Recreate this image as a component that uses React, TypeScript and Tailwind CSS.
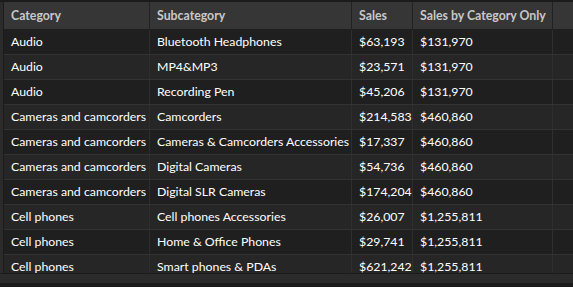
const rows = [
  ["Audio", "Bluetooth Headphones", "$63,193", "$131,970"],
  ["Audio", "MP4&MP3", "$23,571", "$131,970"],
  ["Audio", "Recording Pen", "$45,206", "$131,970"],
  ["Cameras and camcorders", "Camcorders", "$214,583", "$460,860"],
  ["Cameras and camcorders", "Cameras & Camcorders Accessories", "$17,337", "$460,860"],
  ["Cameras and camcorders", "Digital Cameras", "$54,736", "$460,860"],
  ["Cameras and camcorders", "Digital SLR Cameras", "$174,204", "$460,860"],
  ["Cell phones", "Cell phones Accessories", "$26,007", "$1,255,811"],
  ["Cell phones", "Home & Office Phones", "$29,741", "$1,255,811"],
  ["Cell phones", "Smart phones & PDAs", "$621,242", "$1,255,811"],
];

const cols = "grid grid-cols-[146px_202px_61px_140px_1fr]";

export default function App() {
  return (
    <div
      className="w-[573px] h-[287px] bg-[#1b1b1b] overflow-hidden text-[12.3px]"
      style={{ fontFamily: 'Lato, "Open Sans", sans-serif' }}
    >
      <div className="flex h-[273px] border-t-2 border-[#1b1b1b]">
        {/* left strip */}
        <div className="w-[4px] shrink-0 bg-[#2b2b2b] border-r border-[#1b1b1b]" />
        <div className="flex-1 flex flex-col overflow-hidden">
          <div className={`${cols} h-[28px] shrink-0 bg-[#363636] border-b border-[#1e1e1e] text-[#c8c8c8] font-bold`}>
            <div className="pl-[7px] pt-[2px] flex items-center border-r border-[#222] whitespace-nowrap">Category</div>
            <div className="pl-[7px] pt-[2px] flex items-center border-r border-[#222] whitespace-nowrap">Subcategory</div>
            <div className="pl-[7px] pt-[2px] flex items-center border-r border-[#222] whitespace-nowrap">Sales</div>
            <div className="pl-[7px] pt-[2px] flex items-center border-r border-[#222] whitespace-nowrap">Sales by Category Only</div>
            <div />
          </div>
          {rows.map((r, i) => (
            <div
              key={i}
              className={`${cols} h-[25px] shrink-0 border-b border-[#333] text-white ${
                i % 2 === 0 ? "bg-[#1f1f1f]" : "bg-[#262626]"
              }`}
            >
              {r.map((c, j) => (
                <div key={j} className="pl-[7px] flex items-center border-r border-[#2e2e2e] whitespace-nowrap overflow-hidden">
                  {c}
                </div>
              ))}
              <div />
            </div>
          ))}
        </div>
      </div>
      <div className="h-[10px] bg-[#2b2b2b] border-t border-[#1b1b1b]" />
    </div>
  );
}
